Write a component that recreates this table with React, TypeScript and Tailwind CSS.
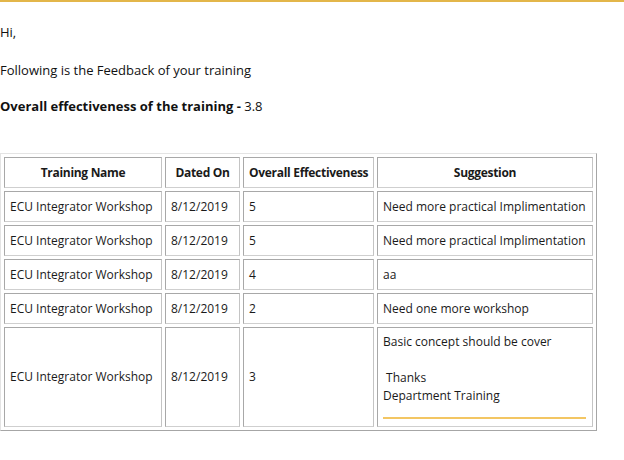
import React from "react";

const rows = [
  { name: "ECU Integrator Workshop", date: "8/12/2019", eff: "5", sug: "Need more practical Implimentation" },
  { name: "ECU Integrator Workshop", date: "8/12/2019", eff: "5", sug: "Need more practical Implimentation" },
  { name: "ECU Integrator Workshop", date: "8/12/2019", eff: "4", sug: "aa" },
  { name: "ECU Integrator Workshop", date: "8/12/2019", eff: "2", sug: "Need one more workshop" },
];

const cell =
  "border-t border-l border-r border-b border-t-[#a8a8a8] border-l-[#a8a8a8] border-r-[#c4c4c4] border-b-[#cfcfcf] px-[5px] py-0 align-middle whitespace-nowrap overflow-hidden";

const head = `${cell} text-center font-bold tracking-[-0.3px]`;

export default function App() {
  return (
    <div
      className="w-[624px] h-[460px] bg-white text-[#111] overflow-hidden"
      style={{ fontFamily: '"Open Sans", "Noto Sans", sans-serif' }}
    >
      <div className="h-[2px] bg-[#e3b64a]" />
      <div className="text-[13px] leading-[18px]">
        <p className="mt-[21px]">Hi,</p>
        <p className="mt-[20px]">Following is the Feedback of your training</p>
        <p className="mt-[18px]">
          <span className="font-bold">Overall effectiveness of the training -</span> 3.8
        </p>
      </div>
      <table className="mt-[38px] table-fixed w-[597px] border-separate border-spacing-[3px] border border-t-[#e4e4e4] border-l-[#e4e4e4] border-r-[#a6a6a6] border-b-[#a6a6a6] text-[12px] leading-[18px] text-[#1a1a1a]">
        <colgroup>
          <col className="w-[158px]" />
          <col className="w-[75px]" />
          <col className="w-[131px]" />
          <col className="w-[216px]" />
        </colgroup>
        <thead>
          <tr className="h-[31px]">
            <th className={head}>Training Name</th>
            <th className={head}>Dated On</th>
            <th className={head}>Overall Effectiveness</th>
            <th className={head}>Suggestion</th>
          </tr>
        </thead>
        <tbody>
          {rows.map((r, i) => (
            <tr key={i} className="h-[31px]">
              <td className={cell}>{r.name}</td>
              <td className={cell}>{r.date}</td>
              <td className={cell}>{r.eff}</td>
              <td className={cell}>{r.sug}</td>
            </tr>
          ))}
          <tr className="h-[100px]">
            <td className={cell}>ECU Integrator Workshop</td>
            <td className={cell}>8/12/2019</td>
            <td className={cell}>3</td>
            <td className={`${cell} align-top pt-[5px]`}>
              <div>Basic concept should be cover</div>
              <div className="h-[18px]" />
              <div>&nbsp;Thanks</div>
              <div>Department Training</div>
              <div className="mt-[12px] h-[2px] bg-[#f3c663] mr-[1px]" />
            </td>
          </tr>
        </tbody>
      </table>
    </div>
  );
}
